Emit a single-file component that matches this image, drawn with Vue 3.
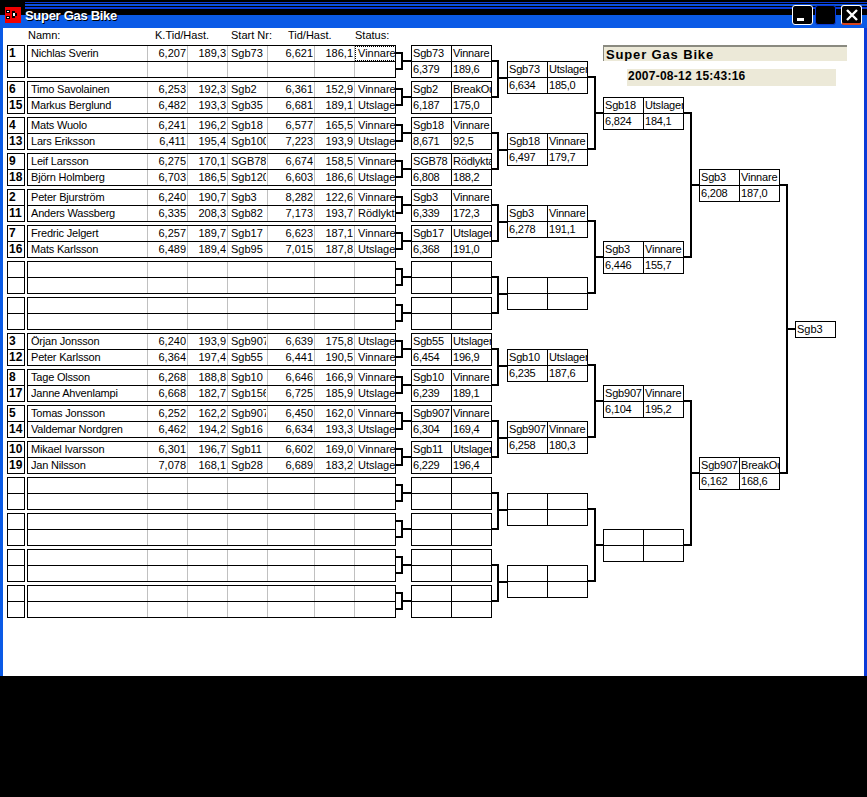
<script setup>
const row = (name, kt, kh, sn, t, h, st) => ({ name, kt, kh, sn, t, h, st })
const blank = row('', '', '', '', '', '', '')
const pair = (a, an, b, bn) => ({ nums: [a, b], rows: [an || blank, bn || blank] })
const groups = [
  pair('1', row('Nichlas Sverin', '6,207', '189,3', 'Sgb73', '6,621', '186,1', 'Vinnare'), '', null),
  pair('6', row('Timo Savolainen', '6,253', '192,3', 'Sgb2', '6,361', '152,9', 'Vinnare'), '15', row('Markus Berglund', '6,482', '193,3', 'Sgb35', '6,681', '189,1', 'Utslagen')),
  pair('4', row('Mats Wuolo', '6,241', '196,2', 'Sgb18', '6,577', '165,5', 'Vinnare'), '13', row('Lars Eriksson', '6,411', '195,4', 'Sgb100', '7,223', '193,9', 'Utslagen')),
  pair('9', row('Leif Larsson', '6,275', '170,1', 'SGB78', '6,674', '158,5', 'Vinnare'), '18', row('Björn Holmberg', '6,703', '186,5', 'Sgb120', '6,603', '186,6', 'Utslagen')),
  pair('2', row('Peter Bjurström', '6,240', '190,7', 'Sgb3', '8,282', '122,6', 'Vinnare'), '11', row('Anders Wassberg', '6,335', '208,3', 'Sgb82', '7,173', '193,7', 'Rödlykta')),
  pair('7', row('Fredric Jelgert', '6,257', '189,7', 'Sgb17', '6,623', '187,1', 'Vinnare'), '16', row('Mats Karlsson', '6,489', '189,4', 'Sgb95', '7,015', '187,8', 'Utslagen')),
  pair('', null, '', null),
  pair('', null, '', null),
  pair('3', row('Örjan Jonsson', '6,240', '193,9', 'Sgb907', '6,639', '175,8', 'Utslagen'), '12', row('Peter Karlsson', '6,364', '197,4', 'Sgb55', '6,441', '190,5', 'Vinnare')),
  pair('8', row('Tage Olsson', '6,268', '188,8', 'Sgb10', '6,646', '166,9', 'Vinnare'), '17', row('Janne Ahvenlampi', '6,668', '182,7', 'Sgb156', '6,725', '185,9', 'Utslagen')),
  pair('5', row('Tomas Jonsson', '6,252', '162,2', 'Sgb907', '6,450', '162,0', 'Vinnare'), '14', row('Valdemar Nordgren', '6,462', '194,2', 'Sgb16', '6,634', '193,3', 'Utslagen')),
  pair('10', row('Mikael Ivarsson', '6,301', '196,7', 'Sgb11', '6,602', '169,0', 'Vinnare'), '19', row('Jan Nilsson', '7,078', '168,1', 'Sgb28', '6,689', '183,2', 'Utslagen')),
  pair('', null, '', null),
  pair('', null, '', null),
  pair('', null, '', null),
  pair('', null, '', null)
]
const b = (a = '', s = '', c = '', d = '') => [a, s, c, d]
const round2 = [
  b('Sgb73', 'Vinnare', '6,379', '189,6'), b('Sgb2', 'BreakOut', '6,187', '175,0'),
  b('Sgb18', 'Vinnare', '8,671', '92,5'), b('SGB78', 'Rödlykta', '6,808', '188,2'),
  b('Sgb3', 'Vinnare', '6,339', '172,3'), b('Sgb17', 'Utslagen', '6,368', '191,0'),
  b(), b(),
  b('Sgb55', 'Utslagen', '6,454', '196,9'), b('Sgb10', 'Vinnare', '6,239', '189,1'),
  b('Sgb907', 'Vinnare', '6,304', '169,4'), b('Sgb11', 'Utslagen', '6,229', '196,4'),
  b(), b(), b(), b()
]
const round3 = [
  b('Sgb73', 'Utslagen', '6,634', '185,0'), b('Sgb18', 'Vinnare', '6,497', '179,7'),
  b('Sgb3', 'Vinnare', '6,278', '191,1'), b(),
  b('Sgb10', 'Utslagen', '6,235', '187,6'), b('Sgb907', 'Vinnare', '6,258', '180,3'),
  b(), b()
]
const round4 = [
  b('Sgb18', 'Utslagen', '6,824', '184,1'), b('Sgb3', 'Vinnare', '6,446', '155,7'),
  b('Sgb907', 'Vinnare', '6,104', '195,2'), b()
]
const round5 = [b('Sgb3', 'Vinnare', '6,208', '187,0'), b('Sgb907', 'BreakOut', '6,162', '168,6')]

const bracket = (x0, xm, x1, top, bottom, out) =>
  `M${x0} ${top}H${xm}V${bottom}H${x0}M${xm} ${out}H${x1}`
const wires = []
for (let i = 0; i < 16; i++) {
  const y = 45 + 36 * i
  wires.push(bracket(396, 402, 411, y + 8, y + 24, y + 16))
}
for (let i = 0; i < 8; i++) wires.push(bracket(492, 498, 507, 61 + 72 * i, 97 + 72 * i, 78 + 72 * i))
for (let i = 0; i < 4; i++) wires.push(bracket(588, 595, 603, 77 + 144 * i, 149 + 144 * i, 113 + 144 * i))
for (let i = 0; i < 2; i++) wires.push(bracket(684, 691, 699, 113 + 288 * i, 257 + 288 * i, 185 + 288 * i))
wires.push(bracket(780, 787, 795, 185, 473, 329))
const wirePath = wires.join('')
</script>

<template>
  <div class="screen">
    <div class="window">
      <header class="titlebar">
        <svg class="app-icon" width="16" height="16" viewBox="0 0 16 16">
          <rect width="16" height="16" fill="#f00000" />
          <path d="M1 3h4v3H1zM1 9h4v3H1zM7 4h3v2h2v3h-2v2H7z" fill="#000" />
          <path d="M2 4h2v1H2zM2 10h2v1H2zM8 6h2v3H8z" fill="#fff" />
        </svg>
        <span class="title">Super Gas Bike</span>
        <div class="controls">
          <div class="btn"><span class="dash"></span></div>
          <div class="btn btn-mid"></div>
          <div class="btn btn-close">
            <svg width="14" height="14" viewBox="0 0 14 14">
              <path d="M2 2l10 10M12 2L2 12" stroke="#fff" stroke-width="2.4" fill="none" />
            </svg>
          </div>
        </div>
      </header>

      <main class="content">
        <section class="entries">
          <div class="heads">
            <span class="h-name">Namn:</span>
            <span class="h-ktid">K.Tid/Hast.</span>
            <span class="h-start">Start Nr:</span>
            <span class="h-tid">Tid/Hast.</span>
            <span class="h-status">Status:</span>
          </div>
          <div class="group-list">
            <div v-for="(g, gi) in groups" :key="gi" class="group">
              <div class="nums">
                <div v-for="(n, ni) in g.nums" :key="ni" class="num">{{ n }}</div>
              </div>
              <div class="table">
                <div v-for="(r, ri) in g.rows" :key="ri" class="trow">
                  <div class="cell"><span class="txt tname">{{ r.name }}</span></div>
                  <div class="cell right"><span class="txt">{{ r.kt }}</span></div>
                  <div class="cell right"><span class="txt">{{ r.kh }}</span></div>
                  <div class="cell"><span class="txt">{{ r.sn }}</span></div>
                  <div class="cell right"><span class="txt">{{ r.t }}</span></div>
                  <div class="cell right"><span class="txt">{{ r.h }}</span></div>
                  <div class="cell last"><span class="txt" :class="{ focus: gi === 0 && ri === 0 }">{{ r.st }}</span></div>
                </div>
              </div>
            </div>
          </div>
        </section>

        <section class="col col2">
          <div v-for="(x, i) in round2" :key="i" class="box">
            <span v-for="(t, j) in x" :key="j" class="bcell">{{ t }}</span>
          </div>
        </section>
        <section class="col col3">
          <div v-for="(x, i) in round3" :key="i" class="box">
            <span v-for="(t, j) in x" :key="j" class="bcell">{{ t }}</span>
          </div>
        </section>
        <section class="col col4">
          <div class="info">
            <div class="info-title">Super Gas Bike</div>
            <div class="info-date">2007-08-12 15:43:16</div>
          </div>
          <div class="col4-boxes">
            <div v-for="(x, i) in round4" :key="i" class="box">
              <span v-for="(t, j) in x" :key="j" class="bcell">{{ t }}</span>
            </div>
          </div>
        </section>
        <section class="col col5">
          <div v-for="(x, i) in round5" :key="i" class="box">
            <span v-for="(t, j) in x" :key="j" class="bcell">{{ t }}</span>
          </div>
        </section>
        <section class="col col6">
          <div class="winner">Sgb3</div>
        </section>
      </main>
    </div>
    <svg class="wires" width="867" height="797" viewBox="0 0 867 797">
      <path :d="wirePath" fill="none" stroke="#000" stroke-width="2" shape-rendering="crispEdges" />
    </svg>
  </div>
</template>

<style>
html, body { margin: 0; background: #000; }
</style>

<style scoped>
.screen {
  position: relative;
  width: 867px;
  height: 797px;
  background: #000;
  overflow: hidden;
  font-family: "Liberation Sans", Arial, sans-serif;
  font-size: 11px;
  color: #000;
}
.window { height: 676px; display: flex; flex-direction: column; }
.titlebar {
  height: 28px;
  flex: none;
  display: flex;
  align-items: flex-start;
  background:
    linear-gradient(to right, #000 0, #000 25px, transparent 25px) 0 0 / 100% 9px no-repeat,
    linear-gradient(to bottom,
      #000 0, #000 2px, #0a3ad8 2px, #0a3ad8 3px, #000 3px, #000 4px,
      #0a50e0 4px, #0a50e0 6px, #000 6px, #000 7px, #0a3ad8 7px, #0a3ad8 9px,
      #000 9px, #000 15px, #0a5ae6 15px, #0a5ae6 100%);
}
.app-icon { margin: 7px 0 0 5px; flex: none; }
.title {
  margin: 8px 0 0 4px;
  color: #fff;
  font-weight: 700;
  font-size: 13px;
  line-height: 16px;
  letter-spacing: -0.3px;
  text-shadow: 1px 1px 0 #000;
}
.controls { margin-left: auto; margin-right: 5px; margin-top: 5px; display: flex; gap: 2px; }
.btn {
  box-sizing: border-box;
  width: 21px;
  height: 20px;
  background: #000;
  border: 1px solid #fff;
  border-radius: 3px;
  position: relative;
}
.dash { position: absolute; left: 4px; top: 12px; width: 7px; height: 3px; background: #fff; }
.btn-mid { border-color: #0a3ad8; margin-right: 3px; }
.btn-close { border-bottom: 2px solid #d8431c; display: flex; align-items: center; justify-content: center; }

.content {
  flex: 1;
  display: flex;
  gap: 15px;
  background: #fff;
  border-left: 3px solid #0a5ae6;
  border-right: 3px solid #0a3ad8;
  padding-left: 4px;
}

.entries { width: 389px; flex: none; }
.heads {
  margin-left: 20px;
  height: 17px;
  display: grid;
  grid-template-columns: 121px 80px 40px 87px 41px;
  line-height: 15px;
}
.h-name { padding-left: 1px; }
.h-ktid { padding-left: 7px; }
.h-start { padding-left: 3px; white-space: nowrap; }
.h-tid { padding-left: 20px; }
.h-status { white-space: nowrap; }

.group-list { display: flex; flex-direction: column; gap: 3px; }
.group { display: flex; gap: 2px; }
.nums { width: 18px; box-sizing: border-box; border: 1px solid #000; flex: none; }
.num {
  height: 15px;
  line-height: 15px;
  padding-left: 1px;
  font-size: 12px;
  font-weight: 700;
  overflow: hidden;
}
.num:first-child { border-bottom: 1px solid #000; }
.table { width: 369px; box-sizing: border-box; border: 1px solid #000; flex: none; }
.trow {
  display: grid;
  grid-template-columns: 120px 40px 40px 40px 47px 40px 40px;
  height: 15px;
}
.trow:first-child { border-bottom: 1px solid #000; }
.cell {
  box-sizing: border-box;
  border-right: 1px solid #c0c0c0;
  padding: 0 1px 0 3px;
  line-height: 15px;
  min-width: 0;
}
.cell.last { border-right: 0; padding: 0 0 0 3px; position: relative; }
.right { text-align: right; }
.txt { display: block; height: 15px; overflow: hidden; white-space: nowrap; }
.tname { letter-spacing: -0.2px; }
.focus {
  position: absolute;
  left: 1px;
  top: 1px;
  right: 0;
  height: 13px;
  line-height: 13px;
  padding-left: 2px;
  outline: 1px dotted #000;
  outline-offset: 0;
}

.col { width: 81px; flex: none; display: flex; flex-direction: column; }
.col2 { padding-top: 17px; gap: 3px; }
.col3 { padding-top: 33px; gap: 39px; }
.col4 { padding-top: 17px; }
.col4-boxes { display: flex; flex-direction: column; gap: 111px; }
.col5 { padding-top: 141px; gap: 255px; }
.col6 { padding-top: 293px; width: 41px; }

.box {
  box-sizing: border-box;
  height: 33px;
  border: 1px solid #000;
  display: grid;
  grid-template-columns: 40px 39px;
  grid-template-rows: 16px 15px;
  background: #fff;
}
.bcell {
  box-sizing: border-box;
  padding-left: 1px;
  line-height: 15px;
  letter-spacing: -0.2px;
  overflow: hidden;
  white-space: nowrap;
}
.bcell:nth-child(1), .bcell:nth-child(3) { border-right: 1px solid #000; }
.bcell:nth-child(1), .bcell:nth-child(2) { border-bottom: 1px solid #000; }

.info { height: 52px; width: 81px; }
.info-title {
  box-sizing: border-box;
  width: 244px;
  height: 16px;
  background: #ece9d8;
  border-top: 2px solid #8a8a80;
  border-left: 1px solid #8a8a80;
  padding-left: 2px;
  font-size: 13px;
  font-weight: 700;
  line-height: 15px;
  letter-spacing: 0.85px;
  overflow: hidden;
  white-space: nowrap;
}
.info-date {
  box-sizing: border-box;
  width: 209px;
  height: 17px;
  margin: 8px 0 0 24px;
  background: #ece9d8;
  padding-left: 1px;
  font-size: 12px;
  font-weight: 700;
  line-height: 15px;
  letter-spacing: 0.25px;
  white-space: nowrap;
}
.winner {
  box-sizing: border-box;
  height: 17px;
  border: 1px solid #000;
  padding-left: 1px;
  line-height: 15px;
  background: #fff;
}
.wires { position: absolute; left: 0; top: 0; pointer-events: none; }
</style>
